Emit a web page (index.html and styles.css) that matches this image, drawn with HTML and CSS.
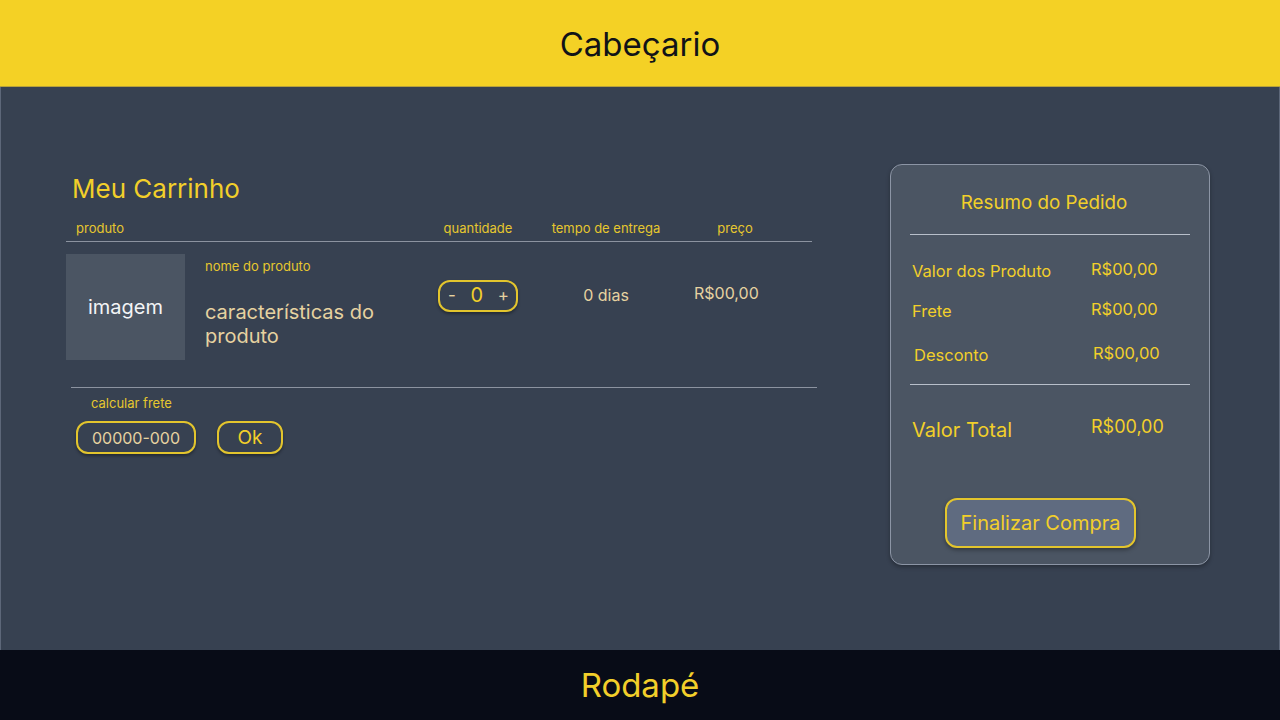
FILE: index.html
```html
<!DOCTYPE html>
<html lang="pt-BR">
<head>
<meta charset="utf-8">
<title>Carrinho</title>
<link rel="stylesheet" href="styles.css">
</head>
<body>
<header class="topo">Cabeçario</header>
<main class="conteudo">
  <section class="carrinho">
    <h1 class="titulo">Meu Carrinho</h1>
    <div class="linha-cab">
      <span class="c-prod">produto</span>
      <span class="c-qtd">quantidade</span>
      <span class="c-tempo">tempo de entrega</span>
      <span class="c-preco">preço</span>
    </div>
    <div class="item">
      <div class="imagem">imagem</div>
      <div class="info">
        <span class="nome">nome do produto</span>
        <span class="carac">características do produto</span>
      </div>
      <div class="qtd"><span>-</span><span class="num">0</span><span>+</span></div>
      <div class="tempo">0 dias</div>
      <div class="preco">R$00,00</div>
    </div>
    <div class="frete">
      <span class="frete-label">calcular frete</span>
      <div class="frete-linha">
        <div class="cep">00000-000</div>
        <button class="ok">Ok</button>
      </div>
    </div>
  </section>
  <aside class="resumo">
    <h2 class="resumo-titulo">Resumo do Pedido</h2>
    <div class="r-linhas">
      <div class="r-linha"><span>Valor dos Produto</span><span>R$00,00</span></div>
      <div class="r-linha"><span>Frete</span><span>R$00,00</span></div>
      <div class="r-linha desc"><span>Desconto</span><span>R$00,00</span></div>
    </div>
    <div class="r-total"><span class="t-label">Valor Total</span><span class="t-valor">R$00,00</span></div>
    <button class="finalizar">Finalizar Compra</button>
  </aside>
</main>
<footer class="rodape">Rodapé</footer>
</body>
</html>
```
FILE: styles.css
```css
* { box-sizing: border-box; margin: 0; padding: 0; }
html, body { height: 100%; }
body {
  font-family: Inter, "Noto Sans", sans-serif;
  background: #374151;
  display: flex;
  flex-direction: column;
  height: 720px;
  overflow: hidden;
}
.topo {
  height: 87px;
  background: #f4d125;
  border-bottom: 1px solid #b8a23a;
  color: #111318;
  font-size: 33px;
  display: flex;
  align-items: center;
  justify-content: center;
  padding-top: 1px;
}
.conteudo {
  flex: 1;
  display: flex;
  align-items: flex-start;
  border-left: 1px solid #5d6779;
  border-right: 1px solid #5d6779;
  padding: 77px 69px 0 65px;
}
.carrinho { width: 752px; }
.titulo {
  font-weight: 400;
  font-size: 26px;
  color: #f2cf2a;
  margin-left: 6px;
  line-height: 30px;
  margin-top: 10px;
}
.linha-cab {
  display: grid;
  grid-template-columns: 372px 80px 176px 82px;
  width: 746px;
  border-bottom: 1.5px solid #8c93a0;
  font-size: 13px;
  color: #e6c72e;
  padding: 2px 0 5px;
  line-height: 16px;
  margin-top: 14px;
}
.c-prod { padding-left: 10px; }
.c-qtd, .c-tempo, .c-preco { text-align: center; }
.item {
  display: grid;
  grid-template-columns: 119px 253px 80px 176px 82px;
  margin-top: 12px;
  height: 106px;
}
.imagem {
  background: #4b5563;
  color: #f3f4f6;
  font-size: 20px;
  display: flex;
  align-items: center;
  justify-content: center;
}
.info {
  display: flex;
  flex-direction: column;
  padding-left: 20px;
  padding-top: 4px;
}
.nome { font-size: 13px; color: #e6c72e; line-height: 16px; }
.carac {
  font-size: 20px;
  color: #e6d2a0;
  line-height: 24px;
  margin-top: 26px;
  width: 200px;
}
.qtd {
  align-self: start;
  margin-top: 26px;
  height: 32px;
  border: 2px solid #e3c52d;
  border-radius: 12px;
  box-shadow: 0 2px 3px rgba(0,0,0,0.35);
  display: flex;
  align-items: center;
  justify-content: space-between;
  padding: 0 7px 2px 8px;
  color: #e6d2a0;
  font-size: 17px;
}
.qtd .num { color: #f2cf2a; font-size: 20px; }
.tempo {
  text-align: center;
  color: #e6d2a0;
  font-size: 16px;
  padding-top: 31px;
}
.preco {
  color: #e6d2a0;
  font-size: 16px;
  padding-top: 29px;
}
.frete {
  border-top: 1.5px solid #8c93a0;
  margin-top: 27px;
  margin-left: 5px;
  width: 746px;
  padding-top: 7px;
}
.frete-label {
  display: block;
  font-size: 13px;
  color: #e6c72e;
  margin-left: 20px;
  line-height: 16px;
}
.frete-linha { display: flex; gap: 21px; margin-top: 10px; margin-left: 5px; }
.cep, .ok {
  height: 33px;
  border: 2px solid #e3c52d;
  border-radius: 12px;
  box-shadow: 0 2px 3px rgba(0,0,0,0.35);
  display: flex;
  align-items: center;
  justify-content: center;
  background: transparent;
  font-family: inherit;
}
.cep { width: 120px; color: #e6d2a0; font-size: 16px; }
.ok { width: 66px; color: #f2cf2a; font-size: 19px; }
.resumo {
  margin-left: auto;
  margin-top: 0;
  width: 320px;
  height: 401px;
  background: #4b5563;
  border: 1px solid #8c95a5;
  border-radius: 12px;
  box-shadow: 0 2px 4px rgba(0,0,0,0.3);
  padding: 0 19px;
  display: flex;
  flex-direction: column;
  color: #f2cf2a;
}
.resumo-titulo {
  font-weight: 400;
  font-size: 18.8px;
  text-align: center;
  line-height: 22px;
  padding: 27px 12px 20px 0;
  border-bottom: 1.5px solid #b8bfca;
}
.r-linhas {
  border-bottom: 1.5px solid #b8bfca;
  padding: 26px 0 19px;
}
.r-linha {
  display: grid;
  grid-template-columns: 179px auto;
  font-size: 16.5px;
  line-height: 20px;
  padding-left: 2px;
  margin-bottom: 0;
}
.r-linha span:last-child { margin-top: -2px; }
.r-linha:first-child { margin-bottom: 20px; }
.r-linha.desc { padding-left: 4px; margin-top: 24px; }
.r-total {
  display: grid;
  grid-template-columns: 179px auto;
  padding-left: 2px;
  padding-top: 33px;
}
.t-label { font-size: 20px; line-height: 24px; }
.t-valor { font-size: 18px; line-height: 22px; margin-top: -2px; }
.finalizar {
  align-self: flex-start;
  margin-left: 35px;
  margin-top: 56px;
  width: 191px;
  height: 50px;
  background: #5f6b80;
  border: 2px solid #e3c52d;
  border-radius: 12px;
  box-shadow: 0 2px 4px rgba(0,0,0,0.35);
  color: #f2cf2a;
  font-family: inherit;
  font-size: 20px;
}
.rodape {
  height: 70px;
  background: #080c17;
  color: #f2cf2a;
  font-size: 33px;
  display: flex;
  align-items: center;
  justify-content: center;
}
```
